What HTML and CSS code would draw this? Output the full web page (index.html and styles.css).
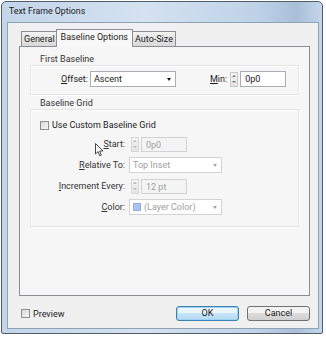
FILE: index.html
```html
<!DOCTYPE html>
<html lang="en">
<head>
  <meta charset="UTF-8">
  <title>Text Frame Options</title>
  <link rel="stylesheet" href="styles.css">
</head>
<body>
<div class="window">
  <div class="titlebar">Text Frame Options</div>
  <div class="client">
    <div class="tabs">
      <div class="tab">General</div>
      <div class="tab active">Baseline Options</div>
      <div class="tab">Auto-Size</div>
    </div>
    <div class="panel">
      <div class="legend">First Baseline</div>
      <div class="box first">
        <div class="row">
          <label class="lbl offset-lbl"><u>O</u>ffset:</label>
          <div class="select offset-select">Ascent<span class="arrow"></span></div>
          <label class="lbl min-lbl"><u>M</u>in:</label>
          <div class="spinner"><span class="up"></span><span class="down"></span></div>
          <div class="field min-field">0p0</div>
        </div>
      </div>
      <div class="legend">Baseline Grid</div>
      <div class="box grid">
        <div class="check-row">
          <span class="checkbox"></span>Use Custom Baseline Grid
        </div>
        <div class="form">
          <label class="lbl"><u>S</u>tart:</label>
          <div class="ctl">
            <div class="spinner off"><span class="up"></span><span class="down"></span></div>
            <div class="field off">0p0</div>
          </div>
          <label class="lbl"><u>R</u>elative To:</label>
          <div class="ctl">
            <div class="select off wide">Top Inset<span class="arrow"></span></div>
          </div>
          <label class="lbl"><u>I</u>ncrement Every:</label>
          <div class="ctl">
            <div class="spinner off"><span class="up"></span><span class="down"></span></div>
            <div class="field off">12 pt</div>
          </div>
          <label class="lbl"><u>C</u>olor:</label>
          <div class="ctl">
            <div class="select off wide"><span class="swatch"></span>(Layer Color)<span class="arrow"></span></div>
          </div>
        </div>
      </div>
      <svg class="cursor" width="9" height="14" viewBox="0 0 9 14">
        <path d="M0.5 0.5 L0.5 11 L3 8.6 L4.8 12.8 L6.3 12.1 L4.6 8 L8 8 Z" fill="#fff" stroke="#333" stroke-width="0.9"/>
      </svg>
    </div>
    <div class="footer">
      <div class="preview"><span class="checkbox"></span>Preview</div>
      <div class="buttons">
        <button class="btn default">OK</button>
        <button class="btn">Cancel</button>
      </div>
    </div>
  </div>
</div>
</body>
</html>
```

FILE: styles.css
```css
html, body {
  margin: 0;
  padding: 0;
  background: #fff;
}

body {
  font: 9px Roboto, "Liberation Sans", sans-serif;
  color: #222;
}

.window {
  margin: 1px 0 0 1px;
  width: 320px;
  height: 331px;
  border: 1px solid #525c68;
  border-radius: 5px 5px 2px 2px;
  background: linear-gradient(to right, #c3d5e9, #d4e2f1 45%, #bed2e8 80%, #a9bfd8 92%, #c4d6ea);
  display: flex;
  flex-direction: column;
}

.titlebar {
  height: 20px;
  padding-left: 7px;
  line-height: 19px;
  font-size: 8.8px;
  color: #1b1b1b;
}

.client {
  flex: 1;
  margin: 0 3px 4px 5px;
  border: 1px solid #8fa1b5;
  background: #f0f0f0;
  padding: 0 8px 0 11px;
  display: flex;
  flex-direction: column;
}

.tabs {
  display: flex;
  align-items: flex-end;
  height: 23px;
  padding-left: 2px;
  position: relative;
  z-index: 1;
}

.tab {
  height: 14px;
  line-height: 14px;
  padding: 0 2px;
  border: 1px solid #8c8e94;
  border-bottom: none;
  background: linear-gradient(to bottom, #f3f3f3, #e3e3e3 50%, #d9d9d9);
  margin-right: -1px;
}

.tab.active {
  height: 17px;
  line-height: 15px;
  padding: 0 4px;
  background: #f8f8f8;
  margin: 0 -1px 0 -1px;
  position: relative;
  top: 1px;
  z-index: 2;
}

.panel {
  height: 250px;
  box-sizing: border-box;
  border: 1px solid #8c8e94;
  background: #f6f6f6;
  position: relative;
  padding: 6px 10px 0 10px;
}

.legend {
  height: 12px;
  line-height: 12px;
  padding-left: 10px;
  color: #333;
}

.box {
  border: 1px solid #e4e4e4;
  box-shadow: 1px 1px 0 #fff, inset 1px 1px 0 #fff;
}

.box.first {
  height: 30px;
  padding-top: 5px;
  box-sizing: border-box;
  margin-bottom: 2px;
}

.box.grid {
  height: 118px;
  box-sizing: border-box;
  padding-top: 9px;
}

.row {
  display: flex;
  align-items: center;
  height: 16px;
}

.lbl u {
  text-decoration: underline;
}

.offset-lbl {
  width: 57px;
  text-align: right;
  padding-right: 2px;
}

.select {
  position: relative;
  height: 16px;
  line-height: 14px;
  border: 1px solid #abadb3;
  background: #fff;
  padding-left: 3px;
  box-sizing: border-box;
}

.offset-select {
  width: 86px;
}

.arrow {
  position: absolute;
  right: 4px;
  top: 6px;
  border-left: 2.5px solid transparent;
  border-right: 2.5px solid transparent;
  border-top: 3px solid #111;
}

.min-lbl {
  margin-left: 34px;
  padding-right: 3px;
}

.spinner {
  width: 8px;
  height: 15px;
  border: 1px solid #c9c9c9;
  box-sizing: border-box;
  background: linear-gradient(to bottom, #f4f4f4, #e4e4e4);
  display: flex;
  flex-direction: column;
  align-items: center;
  justify-content: space-around;
  margin-right: 2px;
}

.up, .down {
  width: 0;
  height: 0;
  border-left: 2px solid transparent;
  border-right: 2px solid transparent;
}

.up {
  border-bottom: 2px solid #7a7a7a;
}

.down {
  border-top: 2px solid #7a7a7a;
}

.field {
  height: 16px;
  line-height: 14px;
  border: 1px solid #abadb3;
  background: #fff;
  box-sizing: border-box;
  padding-left: 4px;
}

.min-field {
  width: 46px;
}

.check-row {
  display: flex;
  align-items: center;
  height: 12px;
  padding-left: 9px;
}

.checkbox {
  width: 9px;
  height: 9px;
  box-sizing: border-box;
  border: 1px solid #8e8f8f;
  background: linear-gradient(135deg, #d8d8d8, #f7f7f7);
  margin-right: 3px;
}

.form {
  display: grid;
  grid-template-columns: 98px auto;
  grid-auto-rows: 16px;
  row-gap: 5px;
  margin-top: 5px;
  align-items: center;
}

.form .lbl {
  text-align: right;
  padding-right: 4px;
  white-space: nowrap;
  color: #333;
}

.ctl {
  display: flex;
  align-items: center;
}

.spinner.off {
  border-color: #d8d8d8;
  margin-left: 2px;
}

.spinner.off .up {
  border-bottom-color: #b8b8b8;
}

.spinner.off .down {
  border-top-color: #b8b8b8;
}

.field.off {
  width: 46px;
  height: 15px;
  border-color: #d3d3d3;
  background: #f4f4f4;
  color: #a0a0a0;
}

.select.off {
  border-color: #d3d3d3;
  color: #a0a0a0;
  display: flex;
  align-items: center;
}

.select.wide {
  width: 93px;
}

.select.off .arrow {
  border-top-color: #a6a6a6;
}

.swatch {
  width: 8px;
  height: 8px;
  background: #a9c5f1;
  border: 1px solid #91acd6;
  box-sizing: border-box;
  margin-right: 3px;
}

.cursor {
  position: absolute;
  left: 75px;
  top: 96px;
}

.footer {
  flex: 1;
  display: flex;
  align-items: center;
  justify-content: space-between;
  padding: 3px 0 0 2px;
}

.preview {
  display: flex;
  align-items: center;
}

.buttons {
  display: flex;
  gap: 8px;
}

.btn {
  width: 63px;
  height: 15px;
  font: inherit;
  color: #222;
  border: 1px solid #707070;
  border-radius: 3px;
  background: linear-gradient(to bottom, #f2f2f2 45%, #dddddd 50%, #cfcfcf);
  padding: 0;
  line-height: 13px;
}

.btn.default {
  border-color: #3c7fb1;
  background: linear-gradient(to bottom, #eaf5fc 45%, #c8e5f8 50%, #b2d9f2);
  box-shadow: inset 0 0 0 1px #9fd3f3;
}
```
